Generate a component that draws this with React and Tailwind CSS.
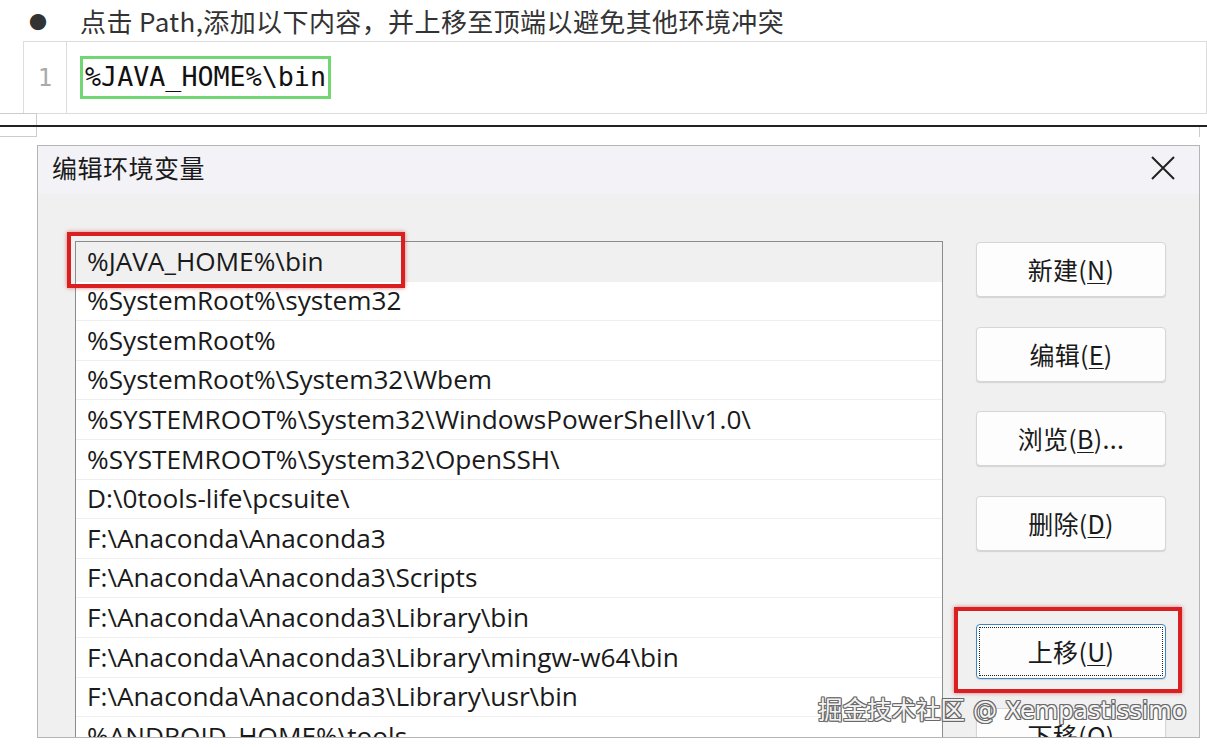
import React from "react";

const rows = [
  "%JAVA_HOME%\\bin",
  "%SystemRoot%\\system32",
  "%SystemRoot%",
  "%SystemRoot%\\System32\\Wbem",
  "%SYSTEMROOT%\\System32\\WindowsPowerShell\\v1.0\\",
  "%SYSTEMROOT%\\System32\\OpenSSH\\",
  "D:\\0tools-life\\pcsuite\\",
  "F:\\Anaconda\\Anaconda3",
  "F:\\Anaconda\\Anaconda3\\Scripts",
  "F:\\Anaconda\\Anaconda3\\Library\\bin",
  "F:\\Anaconda\\Anaconda3\\Library\\mingw-w64\\bin",
  "F:\\Anaconda\\Anaconda3\\Library\\usr\\bin",
  "%ANDROID_HOME%\\tools",
];

function Btn({ label, u, rest, focused }) {
  const text = (
    <span className="font-['Noto_Sans_CJK_SC',sans-serif] tracking-[0.3px]">
      {label}(<span className="underline underline-offset-[3px] decoration-1">{u}</span>){rest}
    </span>
  );
  return (
    <div
      className={
        "h-[55px] w-[190px] rounded-[4px] bg-[#fdfdfd] flex items-center justify-center text-[25px] text-[#1a1a1a] shadow-[0_1px_1px_rgba(0,0,0,0.12)] " +
        (focused ? "border border-[#3d86c6] p-[2px]" : "border border-[#d6d6d6]")
      }
    >
      {focused ? (
        <div className="w-full h-full border border-dotted border-[#222] flex items-center justify-center">{text}</div>
      ) : (
        text
      )}
    </div>
  );
}

export default function App() {
  return (
    <div className="w-[1207px] h-[747px] bg-white overflow-hidden relative font-['Open_Sans','Noto_Sans_CJK_SC',sans-serif]">
      {/* bullet line */}
      <div className="h-[41px] flex items-center font-['Noto_Sans_CJK_SC',sans-serif] text-[#333]">
        <span className="w-[80px] pl-[29px] text-[18px] leading-none">●</span>
        <span className="text-[26px] leading-none tracking-[0.4px]">点击 Path,添加以下内容，并上移至顶端以避免其他环境冲突</span>
      </div>
      {/* code block */}
      <div className="ml-[23px] h-[73px] border border-[#dcdcdc] flex">
        <div className="w-[43px] border-r border-[#dcdcdc] flex items-center justify-center text-[24px] text-[#aaa] font-['DejaVu_Sans_Mono',monospace]">
          1
        </div>
        <div className="flex items-center pl-[13px]">
          <div className="h-[43px] border-[3px] border-[#72d672] flex items-center px-[2px] text-[26.7px] text-[#111] font-['DejaVu_Sans_Mono',monospace] leading-none">
            %JAVA_HOME%\bin
          </div>
        </div>
      </div>
      {/* table fragments */}
      <div className="h-[32px] -mt-[1px] flex flex-col">
        <div className="h-[12px] flex">
          <div className="w-[37px] border-t border-r border-[#ccc]"></div>
        </div>
        <div className="h-[2px] bg-[#222]"></div>
        <div className="flex h-[10px]">
          <div className="w-[37px] border-r border-b border-[#ccc]"></div>
          <div className="flex-1"></div>
          <div className="w-[8px] border-l border-[#ccc]"></div>
        </div>
      </div>
      {/* dialog */}
      <div className="ml-[37px] w-[1163px] h-[593px] border border-[#b5b5b5] bg-[#f0f0f0] overflow-hidden">
        <div className="h-[48px] bg-[#f3f2f6] flex items-start justify-between pl-[14px] pr-[23px] pt-[3px]">
          <span className="text-[25px] text-[#1a1a1a] font-['Noto_Sans_CJK_SC',sans-serif] tracking-[0.5px] leading-[36px]">编辑环境变量</span>
          <svg width="26" height="26" viewBox="0 0 26 26" className="text-[#222] mt-[6px]">
            <path d="M2 2 L24 24 M24 2 L2 24" stroke="currentColor" strokeWidth="2" fill="none" />
          </svg>
        </div>
        <div className="flex pt-[47px] pl-[37px]">
          <div className="relative w-[868px] h-[520px] border border-[#8c8c8c] border-b-0 bg-white">
            {rows.map((r, i) => (
              <div
                key={i}
                className={
                  "h-[39.6px] flex items-center pl-[11px] text-[26.2px] text-[#1a1a1a] border-b border-[#efefef] whitespace-nowrap " +
                  (i === 0 ? "bg-[#f0f0f0]" : "bg-white")
                }
              >
                {r}
              </div>
            ))}
            <div className="absolute left-[-9px] top-[-10px] w-[338px] h-[56px] border-[4px] border-[#d91f1f] shadow-[0_0_4px_rgba(200,0,0,0.5)] pointer-events-none"></div>
          </div>
          <div className="ml-[33px] flex flex-col pt-[1px]">
            <Btn label="新建" u="N" />
            <div className="h-[30px]"></div>
            <Btn label="编辑" u="E" />
            <div className="h-[29px]"></div>
            <Btn label="浏览" u="B" rest="..." />
            <div className="h-[30px]"></div>
            <Btn label="删除" u="D" />
            <div className="h-[73px]"></div>
            <div className="relative">
              <Btn label="上移" u="U" focused />
              <div className="absolute left-[-22px] top-[-17px] w-[228px] h-[86px] border-[4px] border-[#d91f1f] shadow-[0_0_4px_rgba(200,0,0,0.5)] pointer-events-none"></div>
            </div>
            <div className="h-[29px]"></div>
            <Btn label="下移" u="O" />
          </div>
        </div>
      </div>
      {/* watermark */}
      <div className="absolute left-[818px] top-[697px] flex items-baseline leading-none text-[#f4f4f4] [text-shadow:1px_1px_0_#6a6a6a,-1px_-1px_0_#6a6a6a,1px_-1px_0_#6a6a6a,-1px_1px_0_#6a6a6a,0_1px_0_#6a6a6a,0_-1px_0_#6a6a6a,1px_0_0_#6a6a6a,-1px_0_0_#6a6a6a]">
        <span className="text-[24.5px] font-['Noto_Sans_CJK_SC',sans-serif]">掘金技术社区</span>
        <span className="text-[24px] font-['DejaVu_Sans',sans-serif] ml-[8px]">@ Xempastissimo</span>
      </div>
    </div>
  );
}
